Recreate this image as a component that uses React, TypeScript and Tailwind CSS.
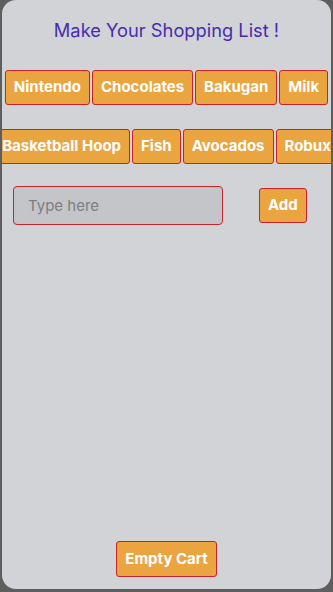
import React from "react"

const row1 = ["Nintendo", "Chocolates", "Bakugan", "Milk"]
const row2 = ["Basketball Hoop", "Fish", "Avocados", "Robux"]

function ItemButton({ label }: { label: string }) {
  return (
    <button className="h-[35px] shrink-0 whitespace-nowrap rounded-[3px] border-[1.5px] border-[#c8232c] bg-[#eaa540] px-[8px] text-[15px] font-bold text-white">
      {label}
    </button>
  )
}

export default function App() {
  return (
    <div
      className="h-[592px] w-full overflow-hidden bg-[#5e5e5e]"
      style={{ fontFamily: "Inter, 'Liberation Sans', sans-serif" }}
    >
      <div className="mx-[2px] flex h-[589px] flex-col overflow-hidden rounded-[14px] bg-[#d1d3d6]">
        {/* titre */}
        <h1 className="mt-[17px] text-center text-[18.3px] leading-[26px] text-[#4a2bb0]">
          Make Your Shopping List !
        </h1>

        {/* articles */}
        <div className="mt-[27px] flex justify-center gap-[2px]">
          {row1.map((item) => (
            <ItemButton key={item} label={item} />
          ))}
        </div>
        <div className="mt-[24px] flex justify-center gap-[2px]">
          {row2.map((item) => (
            <ItemButton key={item} label={item} />
          ))}
        </div>

        {/* saisie */}
        <div className="mt-[22px] flex items-center pl-[11px]">
          <input
            type="text"
            placeholder="Type here"
            className="h-[39px] w-[210px] rounded-[4px] border-[1.5px] border-[#c8232c] bg-[#c3c5c9] px-[14px] text-[15px] text-gray-700 placeholder:text-[#7c7e82] outline-none"
          />
          <button className="ml-[36px] h-[35px] rounded-[3px] border-[1.5px] border-[#c8232c] bg-[#eaa540] px-[8px] text-[15px] font-bold text-white">
            Add
          </button>
        </div>

        <div className="mt-auto mb-[12px] flex justify-center">
          <button className="h-[36px] rounded-[3px] border-[1.5px] border-[#c8232c] bg-[#eaa540] px-[8px] text-[15px] font-bold text-white">
            Empty Cart
          </button>
        </div>
      </div>
    </div>
  )
}
